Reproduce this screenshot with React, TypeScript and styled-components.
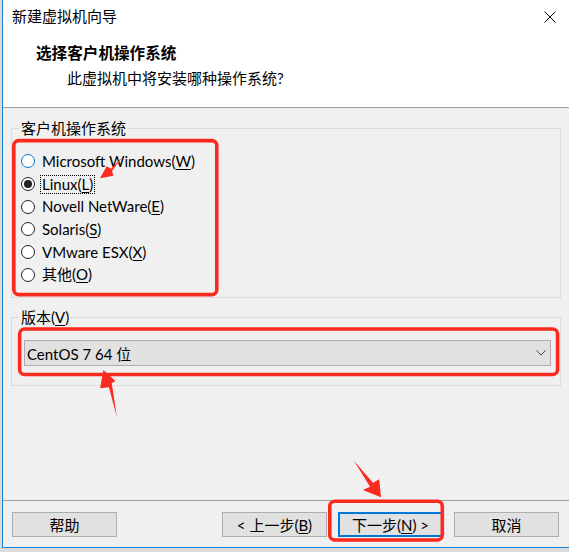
import React from 'react';
import styled, { createGlobalStyle } from 'styled-components';

const GlobalStyle = createGlobalStyle`
  html, body {
    margin: 0;
    padding: 0;
  }
  body {
    background: #dadada;
    font-family: Lato, "Noto Sans CJK SC", sans-serif;
    font-size: 15px;
    color: #000;
  }
`;

const Screen = styled.div`
  position: relative;
  width: 569px;
  height: 552px;
  overflow: hidden;
  background: #dadada;
`;

const Window = styled.div`
  margin-left: 2px;
  width: 566px;
  height: 547px;
  border-left: 1px solid #1883d7;
  border-bottom: 1px solid #1883d7;
  display: flex;
  flex-direction: column;
  background: #f0f0f0;
`;

const TitleBar = styled.div`
  height: 33px;
  flex: none;
  display: flex;
  align-items: center;
  justify-content: space-between;
  padding: 0 13px 0 9px;
  background: #fff;
  line-height: 33px;
`;

const Header = styled.div`
  height: 64px;
  flex: none;
  padding: 10px 0 0 33px;
  background: #fff;
  border-bottom: 1px solid #a0a0a0;
`;

const HeaderTitle = styled.div`
  font-weight: bold;
  font-size: 15.6px;
  line-height: 20px;
`;

const HeaderSub = styled.div`
  margin: 5px 0 0 31px;
  line-height: 20px;
`;

const Body = styled.div`
  height: 382px;
  flex: none;
  padding: 10px 8px 0;
`;

const Group = styled.fieldset<{ $gap?: number }>`
  margin: ${(p) => p.$gap ?? 0}px 0 0;
  padding: 0;
  min-width: 0;
  border: 1px solid #dcdcdc;
`;

const Legend = styled.legend`
  margin-left: 7px;
  padding: 0 2px;
  line-height: 20px;
`;

const RadioList = styled.div`
  padding: 12px 0 11px 9px;
`;

const RadioRow = styled.div`
  height: 22.7px;
  display: flex;
  align-items: center;
`;

const RadioCircle = styled.span<{ $checked?: boolean; $hover?: boolean }>`
  width: 14px;
  height: 14px;
  box-sizing: border-box;
  border-radius: 50%;
  border: 1px solid ${(p) => (p.$hover ? '#0078d7' : '#222')};
  background: #fff;
  display: flex;
  align-items: center;
  justify-content: center;
  margin-right: 5px;

  &::after {
    content: '';
    display: ${(p) => (p.$checked ? 'block' : 'none')};
    width: 8px;
    height: 8px;
    border-radius: 50%;
    background: #222;
  }
`;

const RadioLabel = styled.span<{ $focused?: boolean }>`
  padding: 0 1px;
  line-height: 17px;
  border: 1px dotted ${(p) => (p.$focused ? '#000' : 'transparent')};
`;

const SelectWrap = styled.div`
  padding: 13px 9px 19px 12px;
`;

const Select = styled.div`
  height: 26px;
  box-sizing: border-box;
  display: flex;
  align-items: center;
  justify-content: space-between;
  padding: 0 4px 0 2px;
  background: #e1e1e1;
  border: 1px solid #adadad;
`;

const Footer = styled.div`
  flex: 1;
  display: flex;
  align-items: flex-start;
  padding: 11px 10px 0 9px;
  border-top: 1px solid #a0a0a0;
`;

const ButtonGroup = styled.div`
  margin-left: auto;
  display: flex;
  gap: 11px;
`;

const Button = styled.div<{ $default?: boolean }>`
  width: 105px;
  height: 25px;
  box-sizing: border-box;
  display: flex;
  align-items: center;
  justify-content: center;
  background: #e1e1e1;
  border: ${(p) => (p.$default ? '2px solid #0078d7' : '1px solid #adadad')};
  white-space: pre;
`;

const Key = styled.u`
  text-underline-offset: 2px;
`;

const Overlay = styled.svg`
  position: absolute;
  left: 0;
  top: 0;
  pointer-events: none;
`;

const RED = '#fb2a1e';

const systems = [
  { name: 'Microsoft Windows', key: 'W', hover: true },
  { name: 'Linux', key: 'L', checked: true },
  { name: 'Novell NetWare', key: 'E' },
  { name: 'Solaris', key: 'S' },
  { name: 'VMware ESX', key: 'X' },
  { name: '其他', key: 'O' },
];

const App: React.FC = () => {
  return (
    <Screen>
      <GlobalStyle />
      <Window>
        <TitleBar>
          <span>新建虚拟机向导</span>
          <svg width="12" height="12" viewBox="0 0 12 12">
            <path d="M0.5 0.5L11.5 11.5M11.5 0.5L0.5 11.5" stroke="#000" strokeWidth="1" />
          </svg>
        </TitleBar>
        <Header>
          <HeaderTitle>选择客户机操作系统</HeaderTitle>
          <HeaderSub>此虚拟机中将安装哪种操作系统?</HeaderSub>
        </Header>
        <Body>
          <Group>
            <Legend>客户机操作系统</Legend>
            <RadioList>
              {systems.map((s) => (
                <RadioRow key={s.key}>
                  <RadioCircle $checked={s.checked} $hover={s.hover} />
                  <RadioLabel $focused={s.checked}>
                    {s.name}(<Key>{s.key}</Key>)
                  </RadioLabel>
                </RadioRow>
              ))}
            </RadioList>
          </Group>
          <Group $gap={9}>
            <Legend>
              版本(<Key>V</Key>)
            </Legend>
            <SelectWrap>
              <Select>
                <span>CentOS 7 64 位</span>
                <svg width="10" height="6" viewBox="0 0 10 6">
                  <polyline points="0.5,0.5 5,5 9.5,0.5" fill="none" stroke="#444" strokeWidth="1" />
                </svg>
              </Select>
            </SelectWrap>
          </Group>
        </Body>
        <Footer>
          <Button>帮助</Button>
          <ButtonGroup>
            <Button>
              {'< 上一步('}
              <Key>B</Key>)
            </Button>
            <Button $default>
              下一步(<Key>N</Key>
              {') >'}
            </Button>
            <Button>取消</Button>
          </ButtonGroup>
        </Footer>
      </Window>

      {/* red annotations drawn over the dialog */}
      <Overlay width="569" height="552" viewBox="0 0 569 552">
        <g fill="none" stroke={RED} strokeWidth="3.6">
          <rect x="13.8" y="140.6" width="203" height="154" rx="5" />
          <rect x="19.6" y="329" width="538" height="45.5" rx="5" />
          <rect x="329.8" y="501.3" width="112.5" height="38.7" rx="5" />
        </g>
        <g fill={RED}>
          <polygon points="122.7,156.7 111,168.8 106.7,166.3 100,178.3 113.3,175.7 112,171" />
          <polygon points="103.4,370 115.4,381 111.8,383.3 116.8,416.7 108.9,387.3 100.1,388.3" />
          <polygon points="353.8,460.7 373,482.7 379.2,479.3 381,497.3 362.8,490 370.1,486.7" />
        </g>
      </Overlay>
    </Screen>
  );
};

export default App;
